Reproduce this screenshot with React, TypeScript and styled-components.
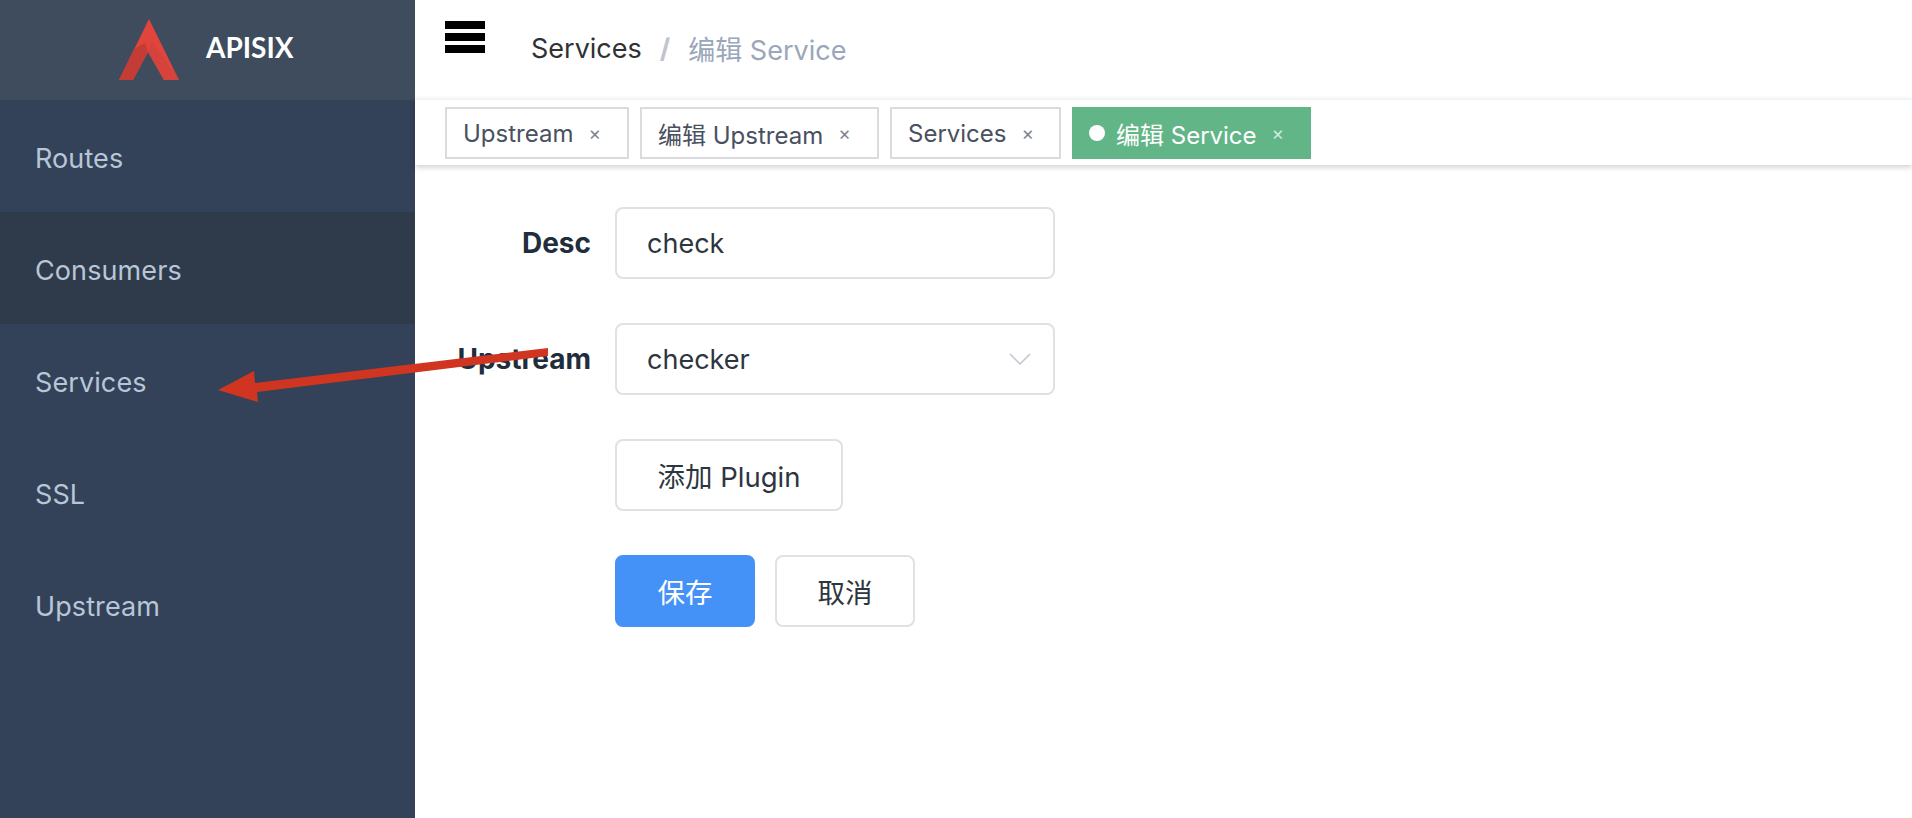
import { createGlobalStyle, styled } from 'styled-components';

const fontStack = `Inter, "Noto Sans CJK SC", sans-serif`;

const GlobalStyle = createGlobalStyle`
	html,
	body {
		margin: 0;
		padding: 0;
		height: 100%;
		background: #fff;
		font-family: ${fontStack};
	}
	* {
		box-sizing: border-box;
	}
`;

const Page = styled.div`
	position: relative;
	display: flex;
	width: 1912px;
	height: 818px;
	overflow: hidden;
`;

const Sidebar = styled.aside`
	display: flex;
	flex-direction: column;
	flex: 0 0 415px;
	background: #334259;
`;

const Brand = styled.div`
	display: flex;
	align-items: center;
	gap: 26px;
	height: 100px;
	padding-left: 119px;
	background: #3e4c5e;
	span {
		margin-bottom: 7px;
		color: #fff;
		font-family: Lato, sans-serif;
		font-size: 28px;
		font-weight: 700;
	}
`;

const MenuItem = styled.div<{ $hover?: boolean }>`
	display: flex;
	align-items: center;
	height: 112px;
	padding: 5px 0 0 35px;
	color: #b8c6d8;
	font-size: 27px;
	letter-spacing: 0.1px;
	background: ${({ $hover }) => ($hover ? '#2f3b4a' : 'transparent')};
`;

const Main = styled.main`
	display: flex;
	flex-direction: column;
	flex: 1;
`;

const Navbar = styled.header`
	display: flex;
	height: 99px;
	padding: 21px 0 0 30px;
`;

const Hamburger = styled.div`
	display: flex;
	flex-direction: column;
	gap: 4px;
	width: 40px;
	height: 32px;
	i {
		display: block;
		height: 8px;
		background: #000;
	}
`;

const Breadcrumb = styled.div`
	display: flex;
	align-items: center;
	height: 54px;
	margin-left: 46px;
	font-size: 27px;
	color: #303133;
	b {
		margin: 0 18px;
		color: #c0c4cc;
		font-weight: 700;
	}
	span {
		color: #9aa6ba;
	}
`;

const TagBar = styled.div`
	display: flex;
	gap: 11px;
	height: 66px;
	padding: 7px 0 0 30px;
	background: #fff;
	border-top: 1px solid #f0f2f4;
	box-shadow: 0 2px 6px rgba(0, 0, 0, 0.2);
`;

const Tag = styled.div<{ $active?: boolean; $width: number }>`
	display: flex;
	align-items: center;
	width: ${({ $width }) => $width}px;
	height: 52px;
	padding-left: ${({ $active }) => ($active ? '15px' : '16px')};
	border: 2px solid ${({ $active }) => ($active ? '#62b587' : '#d9dbde')};
	background: ${({ $active }) => ($active ? '#62b587' : '#fff')};
	color: ${({ $active }) => ($active ? '#fff' : '#495060')};
	font-size: 24px;
	em {
		margin-left: 15px;
		font-style: normal;
		font-size: 19px;
		opacity: 0.7;
	}
`;

const Dot = styled.i`
	width: 16px;
	height: 16px;
	margin-right: 11px;
	border-radius: 50%;
	background: #fff;
`;

const Form = styled.form`
	display: flex;
	flex-direction: column;
	gap: 44px;
	padding: 42px 0 0 30px;
`;

const Row = styled.div`
	display: flex;
	align-items: center;
	height: 72px;
	gap: 24px;
`;

const Label = styled.label`
	width: 146px;
	flex: 0 0 146px;
	text-align: right;
	white-space: nowrap;
	color: #1f2d3d;
	font-size: 28px;
	font-weight: 700;
`;

const Field = styled.div`
	display: flex;
	align-items: center;
	justify-content: space-between;
	width: 440px;
	height: 72px;
	padding: 0 22px 0 30px;
	border: 2px solid #dfe1e4;
	border-radius: 8px;
	color: #2d3540;
	font-size: 27px;
`;

const Actions = styled.div`
	display: flex;
	gap: 20px;
`;

const Button = styled.button<{ $primary?: boolean; $width: number }>`
	width: ${({ $width }) => $width}px;
	height: 72px;
	padding: 0;
	border: 2px solid ${({ $primary }) => ($primary ? '#4491f7' : '#dfe1e4')};
	border-radius: 8px;
	background: ${({ $primary }) => ($primary ? '#4491f7' : '#fff')};
	color: ${({ $primary }) => ($primary ? '#fff' : '#2d3540')};
	font-family: ${fontStack};
	font-size: 27.5px;
`;

const Arrow = styled.svg`
	position: absolute;
	left: 0;
	top: 0;
	pointer-events: none;
`;

const App = () => {
	return (
		<Page>
			<GlobalStyle />
			<Sidebar>
				<Brand>
					<svg width="61" height="62" viewBox="0 0 61 62">
						<polygon points="30,0 0,61 14,61 29,33 45,61 60,61" fill="#e0443a" />
						<polygon points="15,30 26,24 29,33 14,61 0,61" fill="#c43c36" />
						<polygon points="33,22 60,61 45,61 29,33" fill="#d6433c" />
					</svg>
					<span>APISIX</span>
				</Brand>
				<MenuItem>Routes</MenuItem>
				<MenuItem $hover>Consumers</MenuItem>
				<MenuItem>Services</MenuItem>
				<MenuItem>SSL</MenuItem>
				<MenuItem>Upstream</MenuItem>
			</Sidebar>
			<Main>
				<Navbar>
					<Hamburger>
						<i />
						<i />
						<i />
					</Hamburger>
					<Breadcrumb>
						Services<b>/</b>
						<span>编辑 Service</span>
					</Breadcrumb>
				</Navbar>
				<TagBar>
					<Tag $width={184}>Upstream<em>×</em></Tag>
					<Tag $width={239}>编辑 Upstream<em>×</em></Tag>
					<Tag $width={171}>Services<em>×</em></Tag>
					<Tag $active $width={239}>
						<Dot />编辑 Service<em>×</em>
					</Tag>
				</TagBar>
				<Form>
					<Row>
						<Label>Desc</Label>
						<Field>check</Field>
					</Row>
					<Row>
						<Label>Upstream</Label>
						<Field>
							checker
							<svg width="22" height="12" viewBox="0 0 22 12" fill="none" stroke="#c0c4cc" strokeWidth="1.5">
								<path d="M1 1l10 10L21 1" />
							</svg>
						</Field>
					</Row>
					<Row>
						<Label />
						<Button type="button" $width={228}>添加 Plugin</Button>
					</Row>
					<Row>
						<Label />
						<Actions>
							<Button type="button" $primary $width={140}>保存</Button>
							<Button type="button" $width={140}>取消</Button>
						</Actions>
					</Row>
				</Form>
			</Main>
			<Arrow width="1912" height="818" viewBox="0 0 1912 818">
				<polygon points="548,348 548,356 257,392 258,402 218,390 254,371 255,383" fill="#cf3521" />
			</Arrow>
		</Page>
	);
};

export default App;
